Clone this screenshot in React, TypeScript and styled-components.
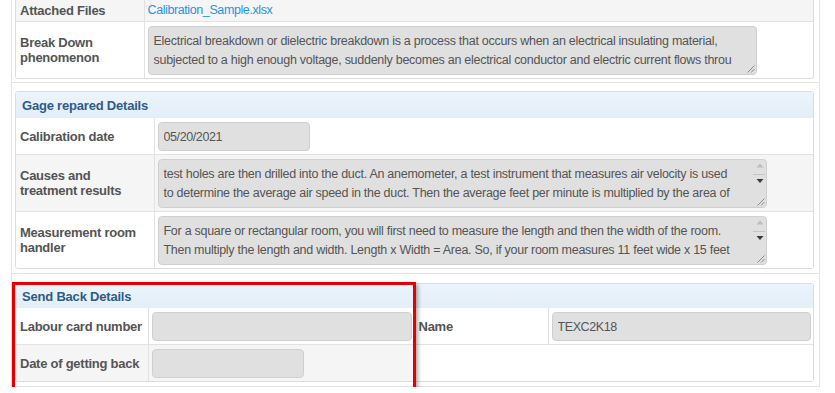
import React from 'react';
import styled, { createGlobalStyle } from 'styled-components';

const GlobalStyle = createGlobalStyle`
    html, body {
        margin: 0;
        padding: 0;
        background: #fff;
        overflow: hidden;
    }
    body {
        font-family: "Liberation Sans", Arial, sans-serif;
        color: #555;
    }
`;

const Page = styled.div`
    margin-left: 11px;
    width: 809px;
    box-sizing: border-box;
    border-left: 1px solid #e3e3e3;
    border-right: 1px solid #e3e3e3;
`;

const Section = styled.section<{ $top: number; $bottom: number }>`
    position: relative;
    padding: ${(p) => p.$top}px 5px ${(p) => p.$bottom}px 3px;
    border-bottom: 1px solid #e3e3e3;
`;

const Panel = styled.div<{ $open?: boolean }>`
    border: 1px solid #dcdcdc;
    border-top-width: ${(p) => (p.$open ? 0 : 1)}px;
    border-radius: ${(p) => (p.$open ? '0 0 3px 3px' : '3px')};
    overflow: hidden;
    background: #fff;
`;

const PanelHeader = styled.div<{ $height: number }>`
    height: ${(p) => p.$height}px;
    display: flex;
    align-items: center;
    padding-left: 6px;
    background: linear-gradient(#ecf4fc, #e2eef9);
    color: #2f5b86;
    font-size: 13px;
    font-weight: bold;
    letter-spacing: -0.2px;
`;

const Grid = styled.table`
    width: 100%;
    border-collapse: collapse;
    table-layout: fixed;
`;

const Row = styled.tr<{ $shaded?: boolean }>`
    background: ${(p) => (p.$shaded ? '#f5f5f5' : '#fff')};

    &:not(:last-child) > td {
        border-bottom: 1px solid #e2e2e2;
    }
`;

const Label = styled.td<{ $height?: number }>`
    height: ${(p) => (p.$height ? `${p.$height}px` : 'auto')};
    padding: 0 4px;
    border-right: 1px solid #e2e2e2;
    vertical-align: middle;
    color: #545454;
    font-size: 13px;
    font-weight: bold;
    line-height: 15px;
    letter-spacing: -0.25px;
`;

const Value = styled.td<{ $flush?: boolean; $tight?: boolean }>`
    padding: ${(p) => (p.$tight ? '0 3px' : '4px 3px 3px')};
    vertical-align: middle;
    font-size: 12px;
    line-height: 15px;
    border-right: ${(p) => (p.$flush ? 'none' : '1px solid #e2e2e2')};
`;

const Blank = styled.td`
    background: #fff;
`;

const FileLink = styled.a`
    color: #2a93de;
    font-size: 12.5px;
    letter-spacing: -0.4px;
    text-decoration: none;
`;

const Input = styled.input<{ $width: number }>`
    display: block;
    width: ${(p) => p.$width}px;
    height: 29px;
    box-sizing: border-box;
    margin: 0;
    padding: 0 5px;
    border: 1px solid #cfcfcf;
    border-radius: 4px;
    background: #e0e0e0;
    color: #555;
    font: 12.5px "Liberation Sans", Arial, sans-serif;
    letter-spacing: -0.4px;
    outline: none;
`;

const Field = styled.div<{ $width: number }>`
    position: relative;
    width: ${(p) => p.$width}px;
`;

const Area = styled.textarea`
    display: block;
    width: 100%;
    height: 49px;
    box-sizing: border-box;
    margin: 0;
    padding: 5px 20px 0 5px;
    border: 1px solid #cfcfcf;
    border-radius: 4px;
    background: #e0e0e0;
    color: #555;
    font: 12.5px/19px "Liberation Sans", Arial, sans-serif;
    letter-spacing: -0.27px;
    white-space: pre;
    overflow: hidden;
    resize: none;
    outline: none;
`;

const Scroll = styled.svg`
    position: absolute;
    top: 1px;
    right: 1px;
`;

const Grip = styled.svg`
    position: absolute;
    right: 2px;
    bottom: 2px;
`;

const Highlight = styled.div`
    position: absolute;
    left: 0;
    top: 8px;
    width: 404px;
    height: 140px;
    box-sizing: border-box;
    border: 3px solid #e30000;
    box-shadow: 2px 2px 4px rgba(0, 0, 0, 0.35);
    pointer-events: none;
`;

function TextBox({ lines, scroll }: { lines: string[]; scroll?: boolean }) {
    return (
        <Field $width={609}>
            <Area readOnly wrap="off" value={lines.join('\n')} />
            {scroll && (
                <Scroll width="16" height="30" viewBox="0 0 16 30">
                    <polygon points="6.5,7.5 13.5,7.5 10,3.5" fill="#bdbdbd" />
                    <line x1="3" y1="14.5" x2="15" y2="14.5" stroke="#c4c4c4" />
                    <polygon points="6.5,19 13.5,19 10,23" fill="#3a3a3a" />
                </Scroll>
            )}
            <Grip width="8" height="8" viewBox="0 0 8 8">
                <line x1="7.5" y1="0.5" x2="0.5" y2="7.5" stroke="#8a8a8a" />
                <line x1="7.5" y1="4" x2="4" y2="7.5" stroke="#8a8a8a" />
            </Grip>
        </Field>
    );
}

export default function App() {
    return (
        <>
            <GlobalStyle />
            <Page>
                <Section $top={0} $bottom={3}>
                    <Panel $open>
                        <Grid>
                            <colgroup>
                                <col style={{ width: 128 }} />
                                <col />
                            </colgroup>
                            <tbody>
                                <Row $shaded>
                                    <Label $height={21}>Attached Files</Label>
                                    <Value $flush $tight>
                                        <FileLink href="#">Calibration_Sample.xlsx</FileLink>
                                    </Value>
                                </Row>
                                <Row>
                                    <Label>Break Down phenomenon</Label>
                                    <Value $flush>
                                        <TextBox
                                            lines={[
                                                'Electrical breakdown or dielectric breakdown is a process that occurs when an electrical insulating material,',
                                                'subjected to a high enough voltage, suddenly becomes an electrical conductor and electric current flows throu',
                                            ]}
                                        />
                                    </Value>
                                </Row>
                            </tbody>
                        </Grid>
                    </Panel>
                </Section>

                <Section $top={8} $bottom={4}>
                    <Panel>
                        <PanelHeader $height={26}>Gage repared Details</PanelHeader>
                        <Grid>
                            <colgroup>
                                <col style={{ width: 138 }} />
                                <col />
                            </colgroup>
                            <tbody>
                                <Row>
                                    <Label>Calibration date</Label>
                                    <Value $flush>
                                        <Input $width={152} readOnly value="05/20/2021" />
                                    </Value>
                                </Row>
                                <Row $shaded>
                                    <Label>Causes and treatment results</Label>
                                    <Value $flush>
                                        <TextBox
                                            scroll
                                            lines={[
                                                'test holes are then drilled into the duct. An anemometer, a test instrument that measures air velocity is used',
                                                'to determine the average air speed in the duct. Then the average feet per minute is multiplied by the area of',
                                            ]}
                                        />
                                    </Value>
                                </Row>
                                <Row>
                                    <Label>Measurement room handler</Label>
                                    <Value $flush>
                                        <TextBox
                                            scroll
                                            lines={[
                                                'For a square or rectangular room, you will first need to measure the length and then the width of the room.',
                                                'Then multiply the length and width. Length x Width = Area. So, if your room measures 11 feet wide x 15 feet',
                                            ]}
                                        />
                                    </Value>
                                </Row>
                            </tbody>
                        </Grid>
                    </Panel>
                </Section>

                <Section $top={9} $bottom={4}>
                    <Panel>
                        <PanelHeader $height={24}>Send Back Details</PanelHeader>
                        <Grid>
                            <colgroup>
                                <col style={{ width: 132 }} />
                                <col style={{ width: 266 }} />
                                <col style={{ width: 134 }} />
                                <col />
                            </colgroup>
                            <tbody>
                                <Row>
                                    <Label>Labour card number</Label>
                                    <Value>
                                        <Input $width={260} readOnly value="" />
                                    </Value>
                                    <Label>Name</Label>
                                    <Value $flush>
                                        <Input $width={259} readOnly value="TEXC2K18" />
                                    </Value>
                                </Row>
                                <Row $shaded>
                                    <Label>Date of getting back</Label>
                                    <Value $flush>
                                        <Input $width={152} readOnly value="" />
                                    </Value>
                                    <Blank colSpan={2} />
                                </Row>
                            </tbody>
                        </Grid>
                    </Panel>
                    <Highlight />
                </Section>
            </Page>
        </>
    );
}
